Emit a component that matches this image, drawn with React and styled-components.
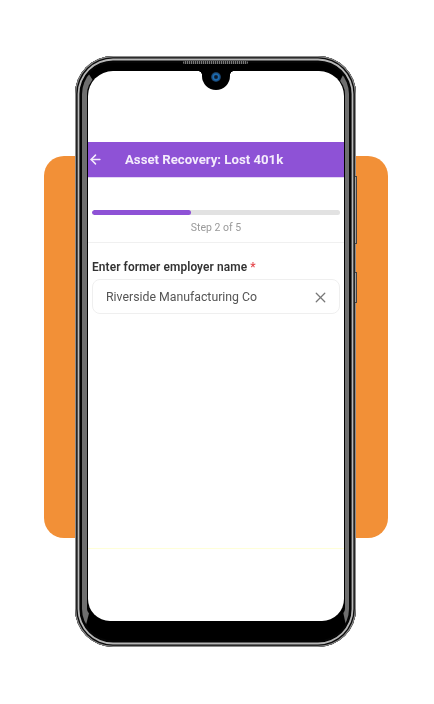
import React from "react";
import styled, { createGlobalStyle } from "styled-components";
import { ArrowLeft, X } from "lucide-react";

const GlobalStyle = createGlobalStyle`
  html, body {
    margin: 0;
    padding: 0;
    background: #fff;
    font-family: Roboto, "Noto Sans", sans-serif;
  }
`;

const Stage = styled.div`
  position: relative;
  width: 434px;
  height: 704px;
  padding: 56px 0 0 75px;
  box-sizing: border-box;
  overflow: hidden;
`;

const Backdrop = styled.div`
  position: absolute;
  left: 44px;
  top: 156px;
  width: 344px;
  height: 382px;
  border-radius: 20px;
  background: #f29037;
`;

const Phone = styled.div`
  position: relative;
  width: 281px;
  height: 591px;
  box-sizing: border-box;
  padding: 7px;
  border-radius: 38px;
  background: #000;
  box-shadow:
    inset 0 0 0 1.2px #8c8c8c,
    inset 0 0 0 2.6px #0c0c0c,
    inset 0 0 0 4.4px #b8b8b8,
    inset 0 0 0 7px #050505;
`;

const Bezel = styled.div`
  height: 100%;
  box-sizing: border-box;
  padding: 0 1.5px 0 1px;
  border-style: solid;
  border-width: 8px 4.5px 19px 5px;
  border-color: #000 #6f6f6f #000 #6f6f6f;
  border-radius: 31px;
  background: #000;
`;

const SideButton = styled.span`
  position: absolute;
  right: -1px;
  top: ${(p) => p.$top}px;
  width: 2px;
  height: ${(p) => p.$height}px;
  background: #a0a0a0;
  border: 1px solid #444;
  border-left: 0;
  box-sizing: border-box;
`;

const Speaker = styled.span`
  position: absolute;
  left: 108px;
  top: 5px;
  width: 65px;
  height: 3px;
  border-radius: 2px;
  background: repeating-linear-gradient(90deg, #777 0 1px, #222 1px 2px);
`;

const Notch = styled.div`
  position: absolute;
  left: 127px;
  top: 14px;
  width: 28px;
  height: 19.5px;
  display: flex;
  justify-content: center;
  padding-top: 2px;
  box-sizing: border-box;
  background: #000;
  border-radius: 0 0 14px 14px;

  &::before,
  &::after {
    content: "";
    position: absolute;
    top: 1px;
    width: 4px;
    height: 4px;
  }

  &::before {
    left: -4px;
    background: radial-gradient(circle at 0 100%, transparent 3.6px, #000 4px);
  }

  &::after {
    right: -4px;
    background: radial-gradient(circle at 100% 100%, transparent 3.6px, #000 4px);
  }
`;

const Lens = styled.span`
  width: 10px;
  height: 10px;
  border-radius: 50%;
  background: radial-gradient(circle at 50% 50%, #0d1a2c 0 18%, #1f74bd 38%, #164a7c 58%, #1a1d24 78%, #0a0a0a 100%);
`;

const Screen = styled.div`
  height: 100%;
  display: flex;
  flex-direction: column;
  overflow: hidden;
  background: #fff;
  border-radius: 25px 25px 22px 22px;
  filter: blur(0.3px);
`;

const StatusGap = styled.div`
  height: 71px;
  flex: none;
`;

const Header = styled.header`
  height: 35px;
  flex: none;
  display: flex;
  align-items: center;
  gap: 22px;
  background: #8e52d6;
  color: #f4ecfc;
  font-size: 13.2px;
  font-weight: 700;
  box-shadow: 0 1px 0 #e3d6f5;

  svg {
    flex: none;
  }
`;

const Progress = styled.section`
  height: 66px;
  flex: none;
  box-sizing: border-box;
  padding: 33px 3.5px 0 4px;
  border-bottom: 1px solid #f0f0f0;
  text-align: center;
`;

const Track = styled.div`
  height: 5px;
  border-radius: 3px;
  background: #e2e2e2;
  overflow: hidden;
`;

const Fill = styled.div`
  height: 100%;
  border-radius: 3px;
  background: #8e52d6;
`;

const StepText = styled.div`
  margin-top: 6px;
  font-size: 10.5px;
  line-height: 13px;
  color: #9a9a9a;
`;

const Form = styled.section`
  height: 306px;
  flex: none;
  box-sizing: border-box;
  padding: 17px 3.5px 0 4px;
  border-bottom: 1px solid #ffffd8;
`;

const Label = styled.label`
  display: block;
  margin-bottom: 4px;
  font-size: 11.9px;
  line-height: 15px;
  font-weight: 600;
  letter-spacing: 0.1px;
  color: #333;
`;

const Required = styled.span`
  color: #e5484d;
`;

const Field = styled.div`
  height: 35px;
  display: flex;
  align-items: center;
  justify-content: space-between;
  box-sizing: border-box;
  padding: 0 10px 0 13px;
  border: 1px solid #efefef;
  border-radius: 8px;
  font-size: 12.3px;
  color: #555;

  svg {
    flex: none;
    color: #777;
    margin-top: 2px;
  }
`;

export default function App() {
  return (
    <>
      <GlobalStyle />
      <Stage>
        <Backdrop />
        <Phone>
          <SideButton $top={120} $height={68} />
          <SideButton $top={216} $height={31} />
          <Bezel>
            <Screen>
              <StatusGap />
              <Header>
                <ArrowLeft size={15} strokeWidth={2.4} />
                <span>Asset Recovery: Lost 401k</span>
              </Header>
              <Progress>
                <Track>
                  <Fill style={{ width: "40%" }} />
                </Track>
                <StepText>Step 2 of 5</StepText>
              </Progress>
              <Form>
                <Label>
                  Enter former employer name <Required>*</Required>
                </Label>
                <Field>
                  <span>Riverside Manufacturing Co</span>
                  <X size={17} strokeWidth={1.8} />
                </Field>
              </Form>
            </Screen>
          </Bezel>
          <Speaker />
          <Notch>
            <Lens />
          </Notch>
        </Phone>
      </Stage>
    </>
  );
}
